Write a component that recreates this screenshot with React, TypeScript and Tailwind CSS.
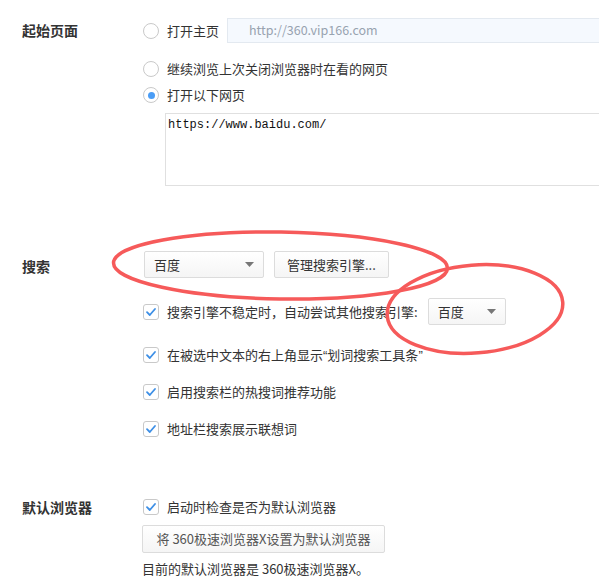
import React from "react";

const Radio = ({ checked = false }: { checked?: boolean }) => (
  <span className="flex h-[16px] w-[16px] shrink-0 items-center justify-center rounded-full border border-[#c9c9c9] bg-white">
    {checked && <span className="h-[7px] w-[7px] rounded-full bg-[#4a9df6]" />}
  </span>
);

const Check = () => (
  <span className="flex h-[16px] w-[16px] shrink-0 items-center justify-center rounded-[3px] border border-[#c9c9c9] bg-white">
    <svg width="12" height="12" viewBox="0 0 12 12" fill="none">
      <path d="M2 6.2 L4.8 9 L10 3" stroke="#3d8fe6" strokeWidth="1.8" strokeLinecap="round" strokeLinejoin="round" />
    </svg>
  </span>
);

const Caret = () => (
  <svg width="9" height="5" viewBox="0 0 9 5">
    <path d="M0 0 H9 L4.5 5 Z" fill="#777" />
  </svg>
);

const Select = ({ width }: { width: string }) => (
  <div
    className={`flex h-[27px] ${width} items-center justify-between rounded-[2px] border border-[#dcdcdc] bg-gradient-to-b from-white to-[#f5f5f5] pl-[9px] pr-[9px]`}
  >
    <span>百度</span>
    <Caret />
  </div>
);

const Label = ({ children }: { children: React.ReactNode }) => (
  <div className="w-[143px] shrink-0 pl-[22px] text-[14px] font-bold text-[#333]">{children}</div>
);

const Quote = ({ children }: { children: React.ReactNode }) => (
  <span className="font-['Liberation_Sans',sans-serif]">{children}</span>
);

export default function App() {
  return (
    <div className="relative h-[577px] w-[599px] overflow-hidden bg-white font-['Noto_Sans_CJK_SC',sans-serif] text-[13px] text-[#333]">
      {/* 起始页面 */}
      <div className="flex pt-[18px]">
        <Label>
          <div className="flex h-[25px] items-center">起始页面</div>
        </Label>
        <div className="flex min-w-0 flex-1 flex-col">
          <div className="flex h-[25px] items-center">
            <Radio />
            <span className="ml-[8px] whitespace-nowrap">打开主页</span>
            <div className="ml-[8px] flex h-[25px] min-w-[400px] flex-1 items-center border border-[#e3e9f0] bg-[#f5f9fe] pl-[21px] text-[12.5px] text-[#98a3b0]">
              http://360.vip166.com
            </div>
          </div>
          <div className="mt-[16px] flex h-[20px] items-center">
            <Radio />
            <span className="ml-[8px] whitespace-nowrap">继续浏览上次关闭浏览器时在看的网页</span>
          </div>
          <div className="mt-[6px] flex h-[20px] items-center">
            <Radio checked />
            <span className="ml-[8px] whitespace-nowrap">打开以下网页</span>
          </div>
          <div className="ml-[22px] mt-[8px] h-[73px] min-w-[450px] border border-[#e0e0e0] px-[2px] pt-[2px] font-['Liberation_Mono',monospace] text-[12px] text-[#111]">
            https://www.baidu.com/
          </div>
        </div>
      </div>

      {/* 搜索 */}
      <div className="mt-[65px] flex">
        <Label>
          <div className="flex h-[30px] items-center">搜索</div>
        </Label>
        <div className="flex flex-1 flex-col">
          <div className="flex items-center gap-[10px] pl-[1px]">
            <Select width="w-[120px]" />
            <div className="flex h-[27px] items-center rounded-[2px] border border-[#dcdcdc] bg-gradient-to-b from-white to-[#f5f5f5] px-[12px]">
              管理搜索引擎...
            </div>
          </div>
          <div className="mt-[20px] flex h-[27px] items-center">
            <Check />
            <span className="ml-[8px] whitespace-nowrap">搜索引擎不稳定时，自动尝试其他搜索引擎:</span>
            <div className="ml-[10px]">
              <Select width="w-[78px]" />
            </div>
          </div>
          <div className="mt-[20px] flex h-[20px] items-center">
            <Check />
            <span className="ml-[8px] whitespace-nowrap">
              在被选中文本的右上角显示<Quote>“</Quote>划词搜索工具条<Quote>”</Quote>
            </span>
          </div>
          <div className="mt-[17px] flex h-[20px] items-center">
            <Check />
            <span className="ml-[8px] whitespace-nowrap">启用搜索栏的热搜词推荐功能</span>
          </div>
          <div className="mt-[17px] flex h-[20px] items-center">
            <Check />
            <span className="ml-[8px] whitespace-nowrap">地址栏搜索展示联想词</span>
          </div>
        </div>
      </div>

      {/* 默认浏览器 */}
      <div className="mt-[58px] flex">
        <Label>
          <div className="flex h-[20px] items-center">默认浏览器</div>
        </Label>
        <div className="flex flex-1 flex-col items-start">
          <div className="flex h-[20px] items-center">
            <Check />
            <span className="ml-[8px] whitespace-nowrap">启动时检查是否为默认浏览器</span>
          </div>
          <div className="-ml-[1px] mt-[8px] flex h-[28px] w-[243px] items-center justify-center rounded-[2px] border border-[#dcdcdc] bg-gradient-to-b from-white to-[#f5f5f5] text-[#555]">
            将 360极速浏览器X设置为默认浏览器
          </div>
          <div className="-ml-[1px] mt-[6px] h-[20px] whitespace-nowrap leading-[20px]">
            目前的默认浏览器是 360极速浏览器X。
          </div>
        </div>
      </div>

      {/* hand-drawn highlight rings */}
      <svg className="pointer-events-none absolute inset-0" width="599" height="577">
        <ellipse cx="280.5" cy="265.5" rx="167" ry="33.5" transform="rotate(0.9 280.5 265.5)" fill="none" stroke="#f65a5a" strokeWidth="3.5" />
        <ellipse cx="475" cy="309" rx="88" ry="44" transform="rotate(-4.5 475 309)" fill="none" stroke="#f65a5a" strokeWidth="3.5" />
      </svg>
    </div>
  );
}
